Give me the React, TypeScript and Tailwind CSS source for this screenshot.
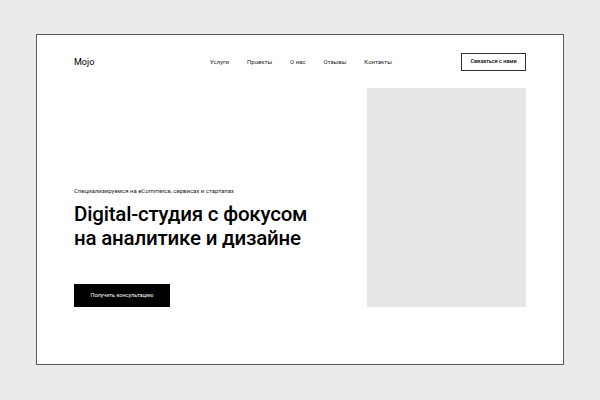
export default function App() {
  const nav = ["Услуги", "Проекты", "О нас", "Отзывы", "Контакты"];
  return (
    <div className="h-[400px] w-[600px] bg-[#ebebeb] pl-[36px] pt-[34px] font-['Roboto',sans-serif] text-black">
      <div className="flex h-[331px] w-[528px] flex-col border border-[#5a5a5a] bg-white px-[37px] pt-[18px]">
        <header className="flex h-[18px] items-center">
          <div className="w-[120px] text-[9px] leading-none">Mojo</div>
          <nav className="flex gap-[18px] pl-[16px] text-[6px] leading-none text-[#222]">
            {nav.map((n) => (
              <span key={n}>{n}</span>
            ))}
          </nav>
          <button className="ml-auto h-[18px] w-[65px] border border-[#333] text-[5.5px] font-medium leading-none">
            Связаться с нами
          </button>
        </header>
        <div className="mt-[17px] flex items-end">
          <div className="flex flex-1 flex-col">
            <p className="text-[6px] leading-none text-[#222]">
              Специализируемся на eCommerce, сервисах и стартапах
            </p>
            <h1 className="mt-[8px] text-[20.5px] font-medium leading-[24px] tracking-[-0.2px]">
              Digital-студия с фокусом
              <br />
              на аналитике и дизайне
            </h1>
            <button className="mt-[34px] h-[23px] w-[96px] bg-black text-[5.5px] leading-none text-white">
              Получить консультацию
            </button>
          </div>
          <div className="h-[219px] w-[159px] bg-[#e6e6e6]" />
        </div>
      </div>
    </div>
  );
}
